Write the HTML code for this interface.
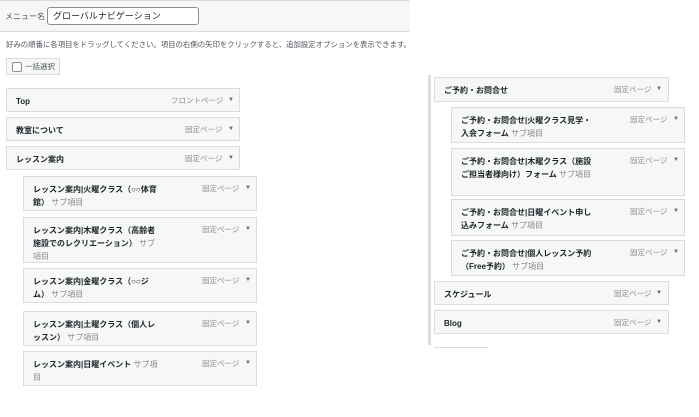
<!DOCTYPE html><html><head><meta charset="utf-8"><style>
body{margin:0;width:699px;height:417px;background:#fff;font-family:"Liberation Sans","Noto Sans CJK JP",sans-serif;position:relative;overflow:hidden;color:#1d2327}
.a{position:absolute}
.it{position:absolute;background:#f6f7f7;border:1px solid #dcdcde;box-sizing:border-box}
.t{position:absolute;left:9px;top:6px;font-size:8px;font-weight:bold;line-height:13px}
.t span{font-weight:normal;color:#888}
.r{position:absolute;top:6px;font-size:7.5px;color:#8c8f94;line-height:11px}
.ar{position:absolute;top:6px;font-size:6px;color:#646970;line-height:11px}
.w{width:135px!important}
</style></head><body>
<div class="a" style="left:0;top:0;width:410px;height:32px;background:#f6f7f7;border-bottom:1px solid #dcdcde;border-top:1px solid #dcdcde;box-sizing:border-box"></div>
<div class="a" style="left:5px;top:11px;font-size:8px;color:#50575e">メニュー名</div>
<div class="a" style="left:47px;top:7px;width:152px;height:18px;border:1px solid #8c8f94;border-radius:3px;background:#fff;box-sizing:border-box;font-size:9px;padding:3px 5px;line-height:11px">グローバルナビゲーション</div>
<div class="a" style="left:6px;top:39px;font-size:7.4px;color:#50575e;white-space:nowrap">好みの順番に各項目をドラッグしてください。項目の右側の矢印をクリックすると、追加設定オプションを表示できます。</div>
<div class="a" style="left:6px;top:58px;width:54px;height:17px;border:1px solid #dcdcde;background:#f6f7f7;box-sizing:border-box"></div>
<div class="a" style="left:12px;top:62px;width:8px;height:8px;border:1px solid #8c8f94;border-radius:2px;background:#fff"></div>
<div class="a" style="left:25px;top:61px;font-size:7.5px;color:#50575e">一括選択</div>

<div class="it" style="left:6px;top:88px;width:234px;height:24px"><div class="t">Top</div><div class="r" style="left:164px">フロントページ</div><div class="ar" style="left:221px">▼</div></div>
<div class="it" style="left:6px;top:117px;width:234px;height:24px"><div class="t">教室について</div><div class="r" style="left:178px">固定ページ</div><div class="ar" style="left:221px">▼</div></div>
<div class="it" style="left:6px;top:146px;width:234px;height:24px"><div class="t">レッスン案内</div><div class="r" style="left:178px">固定ページ</div><div class="ar" style="left:221px">▼</div></div>

<div class="it" style="left:23px;top:176px;width:234px;height:35px"><div class="t" style="width:130px">レッスン案内|火曜クラス（○○体育館） <span>サブ項目</span></div><div class="r" style="left:178px">固定ページ</div><div class="ar" style="left:221px">▼</div></div>
<div class="it" style="left:23px;top:217px;width:234px;height:46px"><div class="t" style="width:130px">レッスン案内|木曜クラス（高齢者施設でのレクリエーション） <span>サブ項目</span></div><div class="r" style="left:178px">固定ページ</div><div class="ar" style="left:221px">▼</div></div>
<div class="it" style="left:23px;top:268px;width:234px;height:35px"><div class="t" style="width:120px">レッスン案内|金曜クラス（○○ジム） <span>サブ項目</span></div><div class="r" style="left:178px">固定ページ</div><div class="ar" style="left:221px">▼</div></div>
<div class="it" style="left:23px;top:311px;width:234px;height:35px"><div class="t" style="width:130px">レッスン案内|土曜クラス（個人レッスン） <span>サブ項目</span></div><div class="r" style="left:178px">固定ページ</div><div class="ar" style="left:221px">▼</div></div>
<div class="it" style="left:23px;top:351px;width:234px;height:35px"><div class="t" style="width:130px">レッスン案内|日曜イベント <span>サブ項目</span></div><div class="r" style="left:178px">固定ページ</div><div class="ar" style="left:221px">▼</div></div>

<div class="a" style="left:428px;top:75px;width:3px;height:270px;background:#dcdcde"></div>
<div class="it" style="left:434px;top:77px;width:235px;height:25px"><div class="t">ご予約・お問合せ</div><div class="r" style="left:179px">固定ページ</div><div class="ar" style="left:221px">▼</div></div>
<div class="it" style="left:451px;top:107px;width:234px;height:36px"><div class="t w">ご予約・お問合せ|火曜クラス見学・入会フォーム <span>サブ項目</span></div><div class="r" style="left:178px">固定ページ</div><div class="ar" style="left:221px">▼</div></div>
<div class="it" style="left:451px;top:148px;width:234px;height:48px"><div class="t w">ご予約・お問合せ|木曜クラス（施設ご担当者様向け）フォーム <span>サブ項目</span></div><div class="r" style="left:178px">固定ページ</div><div class="ar" style="left:221px">▼</div></div>
<div class="it" style="left:451px;top:199px;width:234px;height:37px"><div class="t w">ご予約・お問合せ|日曜イベント申し込みフォーム <span>サブ項目</span></div><div class="r" style="left:178px">固定ページ</div><div class="ar" style="left:221px">▼</div></div>
<div class="it" style="left:451px;top:240px;width:234px;height:36px"><div class="t w">ご予約・お問合せ|個人レッスン予約（Free予約） <span>サブ項目</span></div><div class="r" style="left:178px">固定ページ</div><div class="ar" style="left:221px">▼</div></div>
<div class="it" style="left:434px;top:281px;width:235px;height:24px"><div class="t">スケジュール</div><div class="r" style="left:179px">固定ページ</div><div class="ar" style="left:221px">▼</div></div>
<div class="it" style="left:434px;top:310px;width:235px;height:24px"><div class="t">Blog</div><div class="r" style="left:179px">固定ページ</div><div class="ar" style="left:221px">▼</div></div>
<div class="a" style="left:434px;top:347px;width:54px;height:1px;background:#dcdcde"></div>
</body></html>
